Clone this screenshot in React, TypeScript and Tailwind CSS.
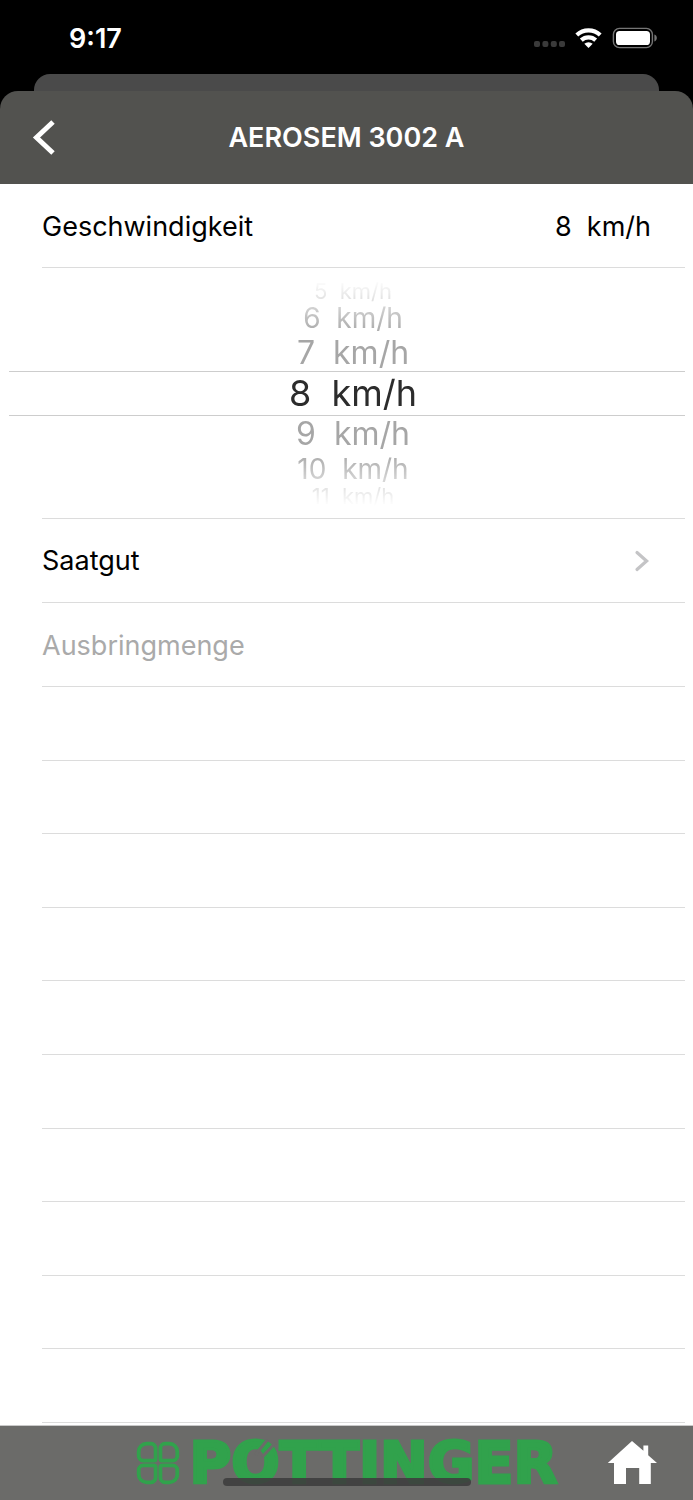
import { useState } from 'react';
import { clsx } from 'clsx';

const MIN_SPEED = 1;
const MAX_SPEED = 25;

// one entry per visible wheel row, from top to bottom
const wheelRows = [
  { offset: -3, className: 'h-5 text-[22px] text-[#b8b8b8]' },
  { offset: -2, className: 'h-[34px] text-[28px] text-[#b0b0b0]' },
  { offset: -1, className: 'h-9 text-[32px] text-[#a6a6a6]' },
  { offset: 0, className: 'h-[45px] text-[36px] text-[#2c2c2c] border-y border-[#cdcdcd]' },
  { offset: 1, className: 'h-9 text-[32px] text-[#a6a6a6]' },
  { offset: 2, className: 'h-[34px] text-[28px] text-[#b0b0b0]' },
  { offset: 3, className: 'h-5 text-[22px] text-[#b8b8b8]' },
];

const emptyRows = Array.from({ length: 10 }, (_, i) => i);

function StatusBar() {
  return (
    <div className="flex h-[74px] items-center justify-between pt-0.5 pr-9 pl-[69px] text-white">
      <span className="pt-0.5 text-[27px] leading-8 font-semibold">9:17</span>
      <div className="flex items-center gap-2.5">
        <svg width="32" height="20" viewBox="0 0 32 20" fill="#3a3a3a" aria-hidden="true">
          <rect x="1" y="13" width="6" height="6" rx="2" />
          <rect x="9.4" y="13" width="6" height="6" rx="2" />
          <rect x="17.8" y="13" width="6" height="6" rx="2" />
          <rect x="26" y="13" width="6" height="6" rx="2" />
        </svg>
        <svg width="27" height="20" viewBox="0 0 27 20" fill="none" aria-label="WLAN">
          <path d="M1.8 7a17.2 17.2 0 0 1 23.4 0" stroke="#fff" strokeWidth="4.2" />
          <path d="M6.3 12.1a10.6 10.6 0 0 1 14.4 0" stroke="#fff" strokeWidth="4.2" />
          <path d="M13.5 20l-4.2-4.2a6.2 6.2 0 0 1 8.4 0z" fill="#fff" />
        </svg>
        <svg width="45" height="22" viewBox="0 0 45 22" fill="none" aria-label="Akku">
          <rect x="1.4" y="1.4" width="39" height="19.2" rx="6" stroke="#757575" strokeWidth="1.4" />
          <rect x="4" y="4" width="34" height="14" rx="3.6" fill="#fff" />
          <path d="M42.4 7.6c1.6.5 2.4 1.8 2.4 3.4s-.8 2.9-2.4 3.4z" fill="#757575" />
        </svg>
      </div>
    </div>
  );
}

function SpeedWheel({ speed, onChange }: { speed: number; onChange: (speed: number) => void }) {
  return (
    <div
      role="group"
      aria-label="Geschwindigkeit wählen"
      className="flex h-[250px] flex-col justify-center pr-2 pl-[9px] mask-[linear-gradient(to_bottom,transparent_12px,black_60px,black_190px,transparent_238px)]"
    >
      {wheelRows.map(({ offset, className }) => {
        const value = speed + offset;
        const inRange = value >= MIN_SPEED && value <= MAX_SPEED;
        return (
          <button
            key={offset}
            type="button"
            disabled={!inRange}
            aria-pressed={offset === 0}
            onClick={() => onChange(value)}
            className={clsx('flex w-full items-center justify-center pl-3 leading-none whitespace-pre', className)}
          >
            {inRange ? `${value}  km/h` : ''}
          </button>
        );
      })}
    </div>
  );
}

function Logo() {
  return (
    <div className="flex items-center gap-2.5" role="img" aria-label="PÖTTINGER">
      <svg width="44" height="44" viewBox="0 0 44 44" fill="none" stroke="#31a24c" strokeWidth="3.8">
        <path d="M10.5 2.7H15a4.6 4.6 0 0 1 4.6 4.6V18a1.6 1.6 0 0 1-1.6 1.6H7.3A4.6 4.6 0 0 1 2.7 15v-4.5a7.8 7.8 0 0 1 7.8-7.8z" />
        <path d="M33.5 2.7H29a4.6 4.6 0 0 0-4.6 4.6V18a1.6 1.6 0 0 0 1.6 1.6h10.7a4.6 4.6 0 0 0 4.6-4.6v-4.5a7.8 7.8 0 0 0-7.8-7.8z" />
        <path d="M10.5 41.3H15a4.6 4.6 0 0 0 4.6-4.6V26a1.6 1.6 0 0 0-1.6-1.6H7.3A4.6 4.6 0 0 0 2.7 29v4.5a7.8 7.8 0 0 0 7.8 7.8z" />
        <path d="M33.5 41.3H29a4.6 4.6 0 0 1-4.6-4.6V26a1.6 1.6 0 0 1 1.6-1.6h10.7a4.6 4.6 0 0 1 4.6 4.6v4.5a7.8 7.8 0 0 1-7.8 7.8z" />
      </svg>
      <span className="font-['DejaVu_Sans',sans-serif] text-[57px] leading-none font-bold text-[#31a24c] [-webkit-text-stroke:3px_#31a24c]">
        P
        <span className="relative inline-block">
          O
          {/* the two cuts that stand for the umlaut */}
          <svg className="absolute inset-0 h-full w-full" viewBox="0 0 48 57" fill="none" stroke="#6b6b69" strokeWidth="3">
            <path d="M24 20L36 5M31 22L44 8" />
          </svg>
        </span>
        TTINGER
      </span>
    </div>
  );
}

export default function App() {
  const [speed, setSpeed] = useState(8);

  return (
    <div className="flex min-h-screen flex-col bg-black font-['Inter',sans-serif] text-[27px] text-black">
      <StatusBar />
      <div className="mx-[34px] h-[17px] rounded-t-2xl bg-[#4a4a4a]" />

      <header className="grid h-[93px] grid-cols-[88px_1fr_88px] items-center rounded-t-[18px] bg-[#52524f] text-white">
        <button type="button" aria-label="Zurück" className="flex h-full items-center pl-8">
          <svg width="24" height="36" viewBox="0 0 24 36" fill="none" stroke="#fff" strokeWidth="5">
            <path d="M21 2L4.5 17.5 21 33" />
          </svg>
        </button>
        <h1 className="text-center text-[27px] leading-8 font-semibold">AEROSEM 3002 A</h1>
      </header>

      <main className="flex flex-1 flex-col bg-white pb-0.5">
        <div className="mr-2 ml-[42px] flex h-[84px] items-center justify-between border-b border-[#dcdcdc] pt-1 pr-[34px]">
          <span>Geschwindigkeit</span>
          <span className="whitespace-pre">{`${speed}  km/h`}</span>
        </div>

        <SpeedWheel speed={speed} onChange={setSpeed} />

        <a
          href="#saatgut"
          className="mr-2 ml-[42px] flex h-[85px] items-center justify-between border-y border-[#dcdcdc] pt-0.5 pr-[34px]"
        >
          Saatgut
          <svg width="18" height="24" viewBox="0 0 18 24" fill="none" stroke="#c4c4c6" strokeWidth="3.2" strokeLinecap="round">
            <path d="M4 2.5l9.6 8.5L4 19.5" />
          </svg>
        </a>
        <div className="mr-2 ml-[42px] flex h-[84px] items-center border-b border-[#dcdcdc] pt-1 text-[#aaaaaa]">
          Ausbringmenge
        </div>

        {emptyRows.map((row) => (
          <div key={row} className="mr-2 ml-[42px] min-h-12 flex-1 border-b border-[#dcdcdc]" />
        ))}
      </main>

      <footer className="relative grid h-[75px] grid-cols-[1fr_auto_1fr] items-center border-t border-[#c9c9c9] bg-[#6b6b69]">
        <div />
        <Logo />
        <a href="#home" aria-label="Startseite" className="mr-9 justify-self-end">
          <svg width="50" height="44" viewBox="0 0 50 44" fill="#fff">
            <path d="M25 0L36.4 9.8V4.6h4.8v9.6L50 22h-6.2v21H32.2V27H19v16H7V22H0.8z" />
          </svg>
        </a>
        <div className="absolute bottom-3.5 left-1/2 h-2 w-[248px] -translate-x-1/2 rounded-full bg-[#3e3e3e]/90" />
      </footer>
    </div>
  );
}
